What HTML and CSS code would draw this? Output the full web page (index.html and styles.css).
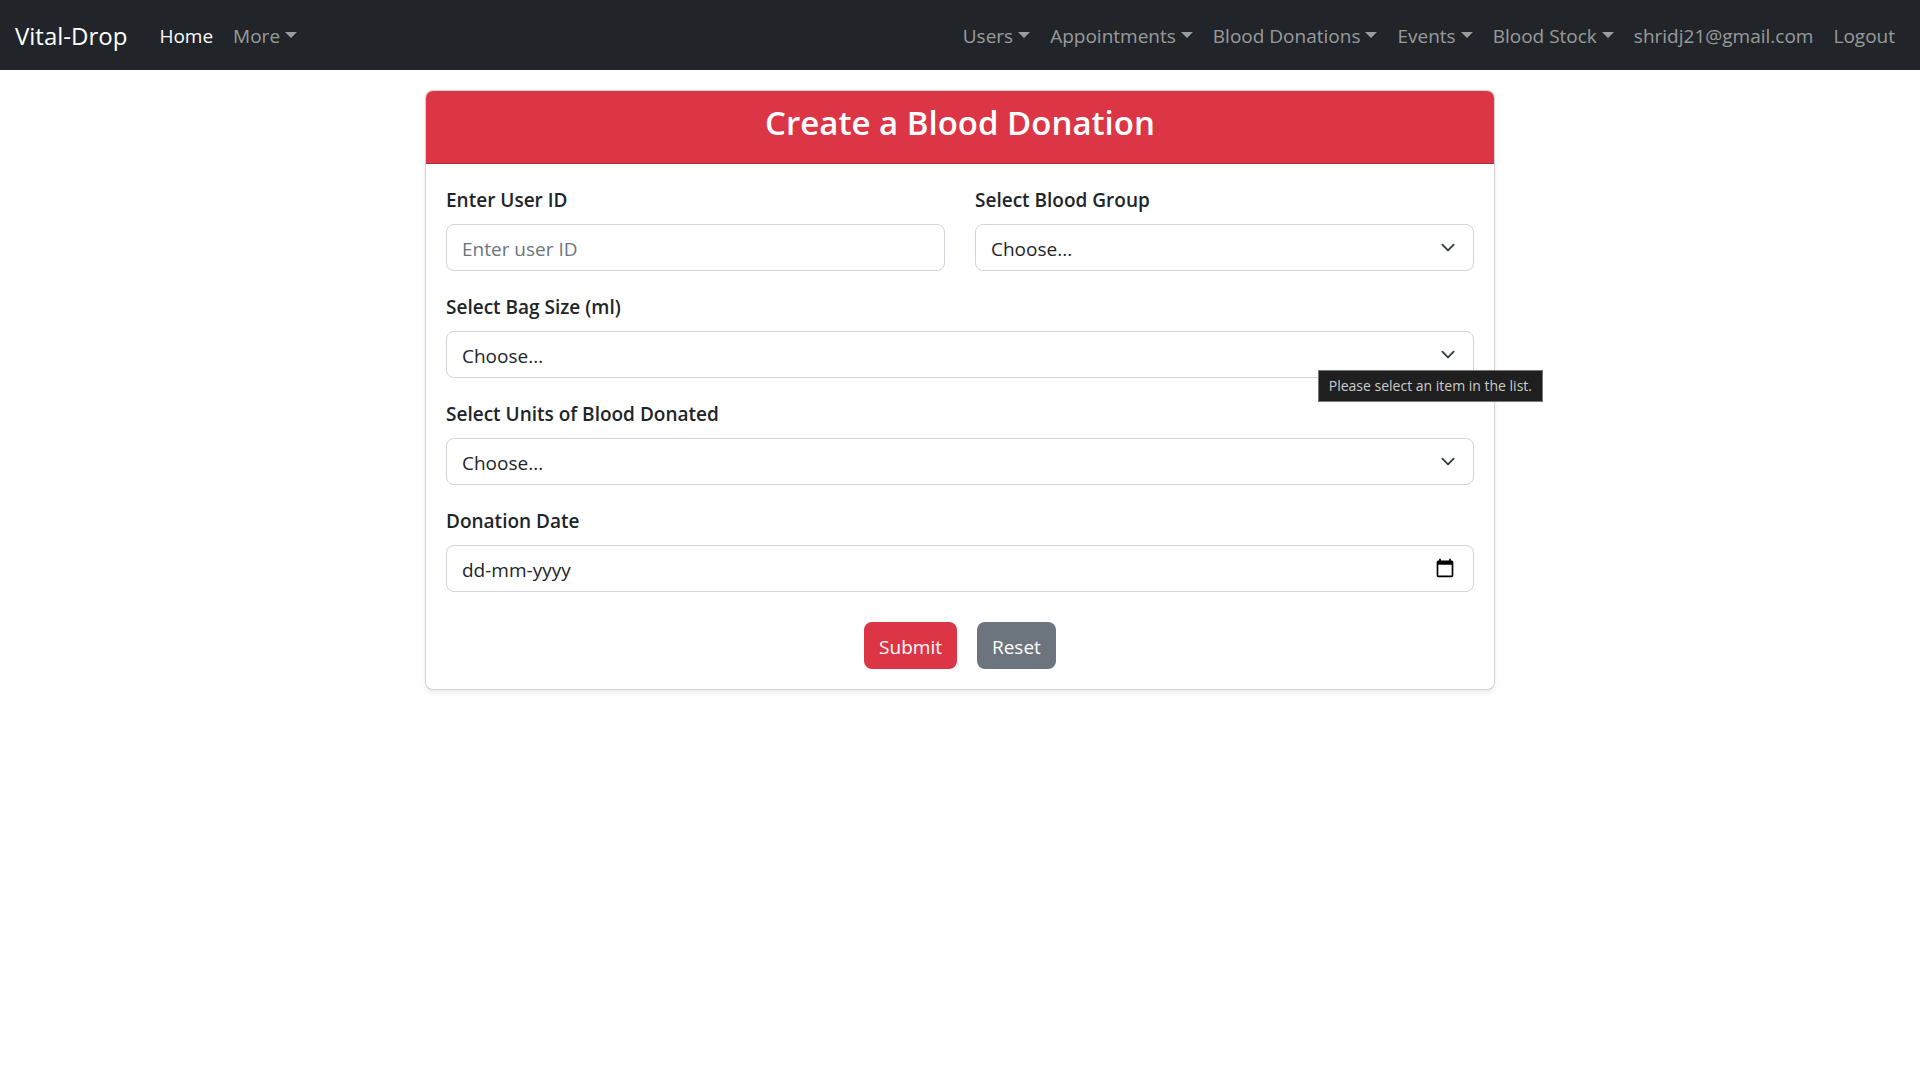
FILE: index.html
```html
<!DOCTYPE html>
<html lang="en">
<head>
  <meta charset="utf-8">
  <meta name="viewport" content="width=device-width, initial-scale=1">
  <title>Vital-Drop</title>
  <link rel="stylesheet" href="styles.css">
</head>
<body>
  <nav class="navbar">
    <a class="brand" href="#">Vital-Drop</a>
    <ul class="nav-list">
      <li><a class="nav-link active" href="#">Home</a></li>
      <li><a class="nav-link dropdown" href="#">More</a></li>
    </ul>
    <ul class="nav-list nav-end">
      <li><a class="nav-link dropdown" href="#">Users</a></li>
      <li><a class="nav-link dropdown" href="#">Appointments</a></li>
      <li><a class="nav-link dropdown" href="#">Blood Donations</a></li>
      <li><a class="nav-link dropdown" href="#">Events</a></li>
      <li><a class="nav-link dropdown" href="#">Blood Stock</a></li>
      <li><a class="nav-link" href="#">shridj21@gmail.com</a></li>
      <li><a class="nav-link" href="#">Logout</a></li>
    </ul>
  </nav>

  <main class="page">
    <section class="card">
      <header class="card-header">
        <h1 class="card-title">Create a Blood Donation</h1>
      </header>
      <form class="card-body">
        <div class="form-row">
          <div class="field">
            <label class="form-label" for="user-id">Enter User ID</label>
            <input class="control" type="text" id="user-id" placeholder="Enter user ID">
          </div>
          <div class="field">
            <label class="form-label" for="blood-group">Select Blood Group</label>
            <div class="control-wrap">
              <select class="control" id="blood-group"><option>Choose...</option></select>
              <svg class="chevron" viewBox="0 0 16 16" aria-hidden="true"><path d="m2 5 6 6 6-6"/></svg>
            </div>
          </div>
        </div>
        <div class="field">
          <label class="form-label" for="bag-size">Select Bag Size (ml)</label>
          <div class="control-wrap">
            <select class="control" id="bag-size" aria-describedby="bag-size-tip"><option>Choose...</option></select>
            <svg class="chevron" viewBox="0 0 16 16" aria-hidden="true"><path d="m2 5 6 6 6-6"/></svg>
            <div class="tooltip" role="tooltip" id="bag-size-tip">Please select an item in the list.</div>
          </div>
        </div>
        <div class="field">
          <label class="form-label" for="units">Select Units of Blood Donated</label>
          <div class="control-wrap">
            <select class="control" id="units"><option>Choose...</option></select>
            <svg class="chevron" viewBox="0 0 16 16" aria-hidden="true"><path d="m2 5 6 6 6-6"/></svg>
          </div>
        </div>
        <div class="field">
          <label class="form-label" for="donation-date">Donation Date</label>
          <div class="control-wrap">
            <input class="control date" type="text" id="donation-date" placeholder="dd-mm-yyyy">
            <button class="picker" type="button" aria-label="Open calendar">
              <svg class="calendar" viewBox="0 0 24 24" aria-hidden="true"><path d="M20 3h-1V1h-2v2H7V1H5v2H4c-1.1 0-2 .9-2 2v16c0 1.1.9 2 2 2h16c1.1 0 2-.9 2-2V5c0-1.1-.9-2-2-2zm0 18H4V8h16v13z"/></svg>
            </button>
          </div>
        </div>
        <div class="actions">
          <button class="btn btn-danger" type="submit">Submit</button>
          <button class="btn btn-secondary" type="reset">Reset</button>
        </div>
      </form>
    </section>
  </main>
</body>
</html>
```
FILE: styles.css
```css
*,
*::before,
*::after {
  box-sizing: border-box;
}

body {
  margin: 0;
  background: #fff;
  color: #212529;
  font-family: "Open Sans", "Noto Sans", sans-serif;
  font-size: 19px;
  line-height: 30px;
}

/* Navigation bar */
.navbar {
  display: flex;
  align-items: center;
  min-height: 70px;
  padding: 11px 15px 9px;
  background: #212529;
}

.brand {
  margin-right: 22px;
  color: #fff;
  font-size: 24px;
  text-decoration: none;
}

.nav-list {
  display: flex;
  margin: 0;
  padding: 0;
  list-style: none;
}

.nav-end {
  margin-left: auto;
}

.nav-link {
  display: block;
  padding: 10px;
  color: rgba(255, 255, 255, 0.55);
  text-decoration: none;
  white-space: nowrap;
}

.nav-link.active {
  color: #fff;
}

.dropdown::after {
  content: "";
  display: inline-block;
  margin-left: 5px;
  vertical-align: 5px;
  border-top: 6px solid;
  border-right: 6px solid transparent;
  border-left: 6px solid transparent;
}

/* Card */
.page {
  padding: 20px 15px;
}

.card {
  max-width: 1070px;
  margin: 0 auto;
  border: 1px solid rgba(0, 0, 0, 0.176);
  border-radius: 8px;
  background: #fff;
  box-shadow: 0 3px 5px rgba(0, 0, 0, 0.075);
}

.card-header {
  padding: 11px 20px 19px;
  border-bottom: 1px solid rgba(0, 0, 0, 0.176);
  border-radius: 7px 7px 0 0;
  background: #dc3545;
  color: #fff;
  text-align: center;
}

.card-title {
  margin: 0;
  font-size: 33px;
  font-weight: 600;
  line-height: 42px;
}

.card-body {
  display: flex;
  flex-direction: column;
  gap: 20px;
  padding: 20px;
}

.form-row {
  display: grid;
  grid-template-columns: 1fr 1fr;
  gap: 30px;
}

.field {
  display: flex;
  flex-direction: column;
  gap: 9px;
}

.form-label {
  padding-top: 1px;
  font-weight: 600;
}

.control-wrap {
  position: relative;
}

.control {
  display: block;
  width: 100%;
  height: 47px;
  margin: 0;
  padding: 2px 15px 0;
  border: 1px solid #ced4da;
  border-radius: 8px;
  background: #fff;
  color: #212529;
  font: inherit;
  appearance: none;
}

.control::placeholder {
  color: #6c757d;
  opacity: 1;
}

.date::placeholder {
  color: #212529;
}

.chevron {
  position: absolute;
  top: 16px;
  right: 16px;
  width: 20px;
  height: 15px;
  fill: none;
  stroke: #343a40;
  stroke-width: 2;
  stroke-linecap: round;
  stroke-linejoin: round;
  pointer-events: none;
}

.picker {
  position: absolute;
  top: 13px;
  right: 19px;
  display: flex;
  padding: 0;
  border: 0;
  background: none;
}

.calendar {
  width: 20px;
  height: 20px;
}

.tooltip {
  position: absolute;
  top: 39px;
  right: -69px;
  z-index: 1;
  padding: 0 10px;
  border: 1px solid #767676;
  background: #1f1f1f;
  color: #ccc;
  font-size: 14px;
  white-space: nowrap;
}

/* Buttons */
.actions {
  display: flex;
  justify-content: center;
  gap: 20px;
  padding-top: 10px;
}

.btn {
  height: 47px;
  padding: 2px 15px 0;
  border: 0;
  border-radius: 8px;
  color: #fff;
  font: inherit;
}

.btn-danger {
  background: #dc3545;
}

.btn-secondary {
  background: #6c757d;
}
```
